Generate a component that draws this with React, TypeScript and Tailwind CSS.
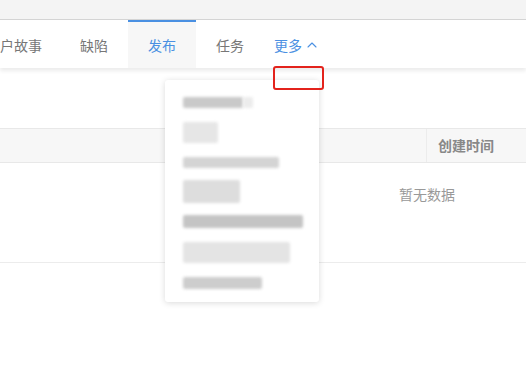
import { ChevronUp } from 'lucide-react';

const font = { fontFamily: '"Noto Sans CJK SC", "Noto Sans", sans-serif' };

const tabs = [
  { label: '户故事', className: 'pl-0 pr-[18px]' },
  { label: '缺陷', className: 'px-5' },
  { label: '发布', className: 'px-5', active: true },
  { label: '任务', className: 'px-5' },
];

// blurred placeholder rows inside the dropdown
const MenuBlur = ({ w, h, tone, mt }: { w: string; h: string; tone: string; mt: string }) => (
  <div className={`${w} ${h} ${tone} ${mt} rounded-[2px] blur-[1.5px]`} />
);

export default function App() {
  return (
    <div className="relative w-[526px] h-[370px] bg-white overflow-hidden" style={font}>
      {/* top strip */}
      <div className="h-5 bg-[#f4f4f4] border-b border-[#d4d4d4]" />

      {/* tabs */}
      <div className="relative z-10 h-[48px] flex items-stretch bg-white shadow-[0_3px_4px_rgba(0,0,0,0.08)] text-[14px]">
        {tabs.map((t) => (
          <div
            key={t.label}
            className={`flex items-center ${t.className} ${
              t.active
                ? 'bg-[#f7f7f7] text-[#4a90e2] border-t-2 border-[#4a90e2]'
                : 'text-[#777] border-t-2 border-transparent'
            }`}
          >
            {t.label}
          </div>
        ))}
        <div className="flex items-center pl-[10px] text-[#4a90e2] border-t-2 border-transparent">
          更多
          <ChevronUp className="ml-[2px] w-[16px] h-[16px]" strokeWidth={1.6} />
        </div>
      </div>

      {/* content */}
      <div className="pt-[60px]">
        <div className="flex h-[35px] bg-[#f7f7f7] border-y border-[#e8e8e8] text-[14px]">
          <div className="flex-1 border-r border-[#ececec]" />
          <div className="w-[99px] flex items-center pl-[11px] font-bold text-[#888]">创建时间</div>
        </div>
        <div className="h-[100px] border-b border-[#ececec] flex justify-end pr-[71px] pt-[21px] text-[14px] text-[#999]">
          暂无数据
        </div>
      </div>

      {/* dropdown menu */}
      <div className="absolute left-[165px] top-[80px] w-[154px] h-[222px] z-20 bg-white rounded-[3px] shadow-[0_1px_6px_rgba(0,0,0,0.15)] pl-[18px] pt-[17px]">
        <div className="flex">
          <MenuBlur w="w-[60px]" h="h-[11px]" tone="bg-[#c9c9c9]" mt="mt-0" />
          <MenuBlur w="w-[10px]" h="h-[11px]" tone="bg-[#ececec]" mt="mt-0" />
        </div>
        <MenuBlur w="w-[35px]" h="h-[21px]" tone="bg-[#e6e6e6]" mt="mt-[14px]" />
        <MenuBlur w="w-[96px]" h="h-[11px]" tone="bg-[#d4d4d4]" mt="mt-[14px]" />
        <MenuBlur w="w-[57px]" h="h-[23px]" tone="bg-[#dddddd]" mt="mt-[12px]" />
        <MenuBlur w="w-[120px]" h="h-[13px]" tone="bg-[#c4c4c4]" mt="mt-[12px]" />
        <MenuBlur w="w-[107px]" h="h-[21px]" tone="bg-[#e4e4e4]" mt="mt-[14px]" />
        <MenuBlur w="w-[79px]" h="h-[12px]" tone="bg-[#cdcdcd]" mt="mt-[14px]" />
      </div>

      {/* red highlight box */}
      <div className="absolute left-[273px] top-[66px] w-[51px] h-[24px] z-30 border-2 border-[#e3231c] rounded-[3px]" />
    </div>
  );
}
